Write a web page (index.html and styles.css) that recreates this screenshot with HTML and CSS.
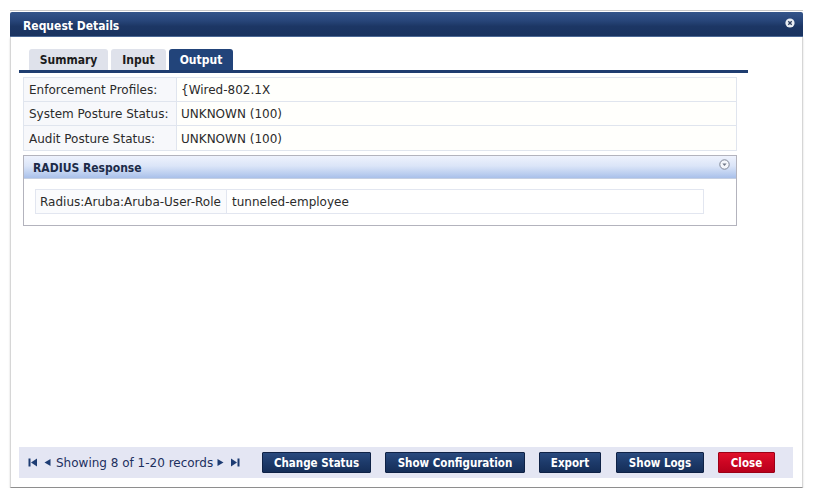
FILE: index.html
```html
<!DOCTYPE html>
<html>
<head>
<meta charset="utf-8">
<link rel="stylesheet" href="styles.css">
</head>
<body>
<div class="dialog">
  <div class="header">
    <span class="title">Request Details</span>
    <svg class="x-icon" width="10" height="10" viewBox="0 0 10 10"><circle cx="5" cy="5" r="4.6" fill="#e9edf3"/><path d="M3.3 3.3 L6.7 6.7 M6.7 3.3 L3.3 6.7" stroke="#2a3b5c" stroke-width="1.3"/></svg>
  </div>
  <div class="body">
    <div class="tabs">
      <div class="tab t-summary">Summary</div>
      <div class="tab t-input">Input</div>
      <div class="tab t-output active">Output</div>
    </div>
    <div class="grid">
      <div class="row"><div class="lbl">Enforcement Profiles:</div><div class="val">{Wired-802.1X</div></div>
      <div class="row"><div class="lbl">System Posture Status:</div><div class="val">UNKNOWN (100)</div></div>
      <div class="row"><div class="lbl">Audit Posture Status:</div><div class="val">UNKNOWN (100)</div></div>
    </div>
    <div class="panel">
      <div class="panel-head">
        <span>RADIUS Response</span>
        <svg class="toggle" width="11" height="11" viewBox="0 0 11 11"><circle cx="5.5" cy="5.5" r="4.7" fill="#f4f6fb" stroke="#7d8494" stroke-width="1"/><path d="M3.4 4.4 L7.6 4.4 L5.5 7 Z" fill="#6d7484"/></svg>
      </div>
      <div class="panel-body">
        <div class="inner">
          <div class="ilbl">Radius:Aruba:Aruba-User-Role</div>
          <div class="ival">tunneled-employee</div>
        </div>
      </div>
    </div>
    <div class="footer">
      <div class="pager">
        <svg width="10" height="9" viewBox="0 0 10 9"><rect x="0.5" y="0.5" width="2" height="8" fill="#1d3c73"/><path d="M9 0.5 L3 4.5 L9 8.5 Z" fill="#1d3c73"/></svg>
        <svg class="pg-gap" width="7" height="9" viewBox="0 0 7 9"><path d="M6.5 1 L0.5 4.5 L6.5 8 Z" fill="#1d3c73"/></svg>
        <span class="pg-text">Showing 8 of 1-20 records</span>
        <svg width="7" height="9" viewBox="0 0 7 9"><path d="M0.5 1 L6.5 4.5 L0.5 8 Z" fill="#1d3c73"/></svg>
        <svg class="pg-gap2" width="10" height="9" viewBox="0 0 10 9"><path d="M1 0.5 L7 4.5 L1 8.5 Z" fill="#1d3c73"/><rect x="7.5" y="0.5" width="2" height="8" fill="#1d3c73"/></svg>
      </div>
      <div class="btns">
        <div class="btn w-status">Change Status</div>
        <div class="btn w-config">Show Configuration</div>
        <div class="btn w-export">Export</div>
        <div class="btn w-logs">Show Logs</div>
        <div class="btn red w-close">Close</div>
      </div>
    </div>
  </div>
</div>
</body>
</html>
```

FILE: styles.css
```css
html, body {
  margin: 0;
  padding: 0;
  background: #ffffff;
}
body {
  font-family: "DejaVu Sans", Verdana, sans-serif;
  font-size: 12px;
  color: #2b2b2b;
}
.dialog {
  margin: 10px 0 0 10px;
  width: 793px;
  border-top: 1px solid #c9c9c9;
  padding-top: 1px;
}
.header {
  height: 25px;
  background: linear-gradient(#34558a 0%, #28467a 35%, #1c3664 60%, #1a3360 100%);
  border-bottom: 1px solid #4d6a98;
  box-sizing: border-box;
  display: flex;
  align-items: center;
  justify-content: space-between;
  padding: 0 8px 0 13px;
  border-radius: 2px 2px 0 0;
}
.title {
  font-family: "DejaVu Sans Condensed", "DejaVu Sans", Tahoma, sans-serif;
  color: #ffffff;
  font-weight: bold;
  font-size: 12px;
  padding-top: 4px;
}
.x-icon {
  display: block;
  margin-top: -3px;
}
.body {
  height: 451px;
  box-sizing: border-box;
  border-left: 1px solid #d6d6d6;
  border-right: 1px solid #d6d6d6;
  border-bottom: 1px solid #8e8e8e;
  box-shadow: 0 1px 2px rgba(0,0,0,0.15);
  padding: 12px 9px 9px 8px;
  display: flex;
  flex-direction: column;
}
.tabs {
  display: flex;
  width: 729px;
  padding-left: 10px;
  box-sizing: border-box;
  border-bottom: 3px solid #1f3d70;
  gap: 2px;
}
.tab {
  font-family: "DejaVu Sans Condensed", "DejaVu Sans", Tahoma, sans-serif;
  height: 21px;
  box-sizing: border-box;
  background: #dfe2eb;
  color: #1b1b1b;
  font-weight: bold;
  font-size: 12px;
  border-radius: 3px 3px 0 0;
  display: flex;
  align-items: center;
  justify-content: center;
  padding-top: 1px;
}
.t-summary { width: 79px; }
.t-input { width: 55px; margin-left: 1px; }
.t-output { width: 64px; margin-left: 1px; }
.tab.active {
  background: #22447a;
  color: #ffffff;
}
.grid {
  margin: 4px 0 0 4px;
  width: 714px;
  border-top: 1px solid #e0e5ee;
}
.row {
  display: flex;
  height: 24px;
  box-sizing: border-box;
  border-bottom: 1px solid #e0e5ee;
  border-left: 1px solid #e0e5ee;
  border-right: 1px solid #e0e5ee;
}
.row:nth-child(3) { height: 25px; }
.lbl {
  width: 153px;
  flex: none;
  background: #f7f8fb;
  border-right: 1px solid #e0e5ee;
  padding-left: 5px;
  padding-top: 1px;
  display: flex;
  align-items: center;
  box-sizing: border-box;
}
.val {
  flex: 1;
  background: #fffffc;
  padding-left: 4px;
  padding-top: 1px;
  display: flex;
  align-items: center;
}
.panel {
  margin: 4px 0 0 4px;
  width: 714px;
  height: 71px;
  box-sizing: border-box;
  border: 1px solid #b3b3bd;
}
.panel-head {
  font-family: "DejaVu Sans Condensed", "DejaVu Sans", Tahoma, sans-serif;
  height: 23px;
  box-sizing: border-box;
  background: linear-gradient(#eef2fd 0%, #dbe5f8 45%, #b7cbee 85%, #a9c0e9 100%);
  border-bottom: 1px solid #c5cfe2;
  display: flex;
  align-items: center;
  justify-content: space-between;
  padding: 0 6px 0 9px;
  font-weight: bold;
  color: #1c2b48;
}
.panel-head span { padding-top: 2px; }
.toggle { display: block; margin-top: -6px; }
.panel-body {
  padding: 10px 0 0 11px;
}
.inner {
  display: flex;
  width: 669px;
  height: 25px;
  box-sizing: border-box;
  border: 1px solid #e2e6f0;
}
.ilbl {
  width: 191px;
  flex: none;
  border-right: 1px solid #e2e6f0;
  background: #fafbfd;
  padding-left: 4px;
  padding-top: 1px;
  box-sizing: border-box;
  display: flex;
  align-items: center;
}
.ival {
  flex: 1;
  padding-left: 5px;
  padding-top: 1px;
  display: flex;
  align-items: center;
}
.footer {
  margin-top: auto;
  height: 31px;
  width: 774px;
  background: #e4e6f3;
  display: flex;
  align-items: center;
  padding-left: 9px;
  box-sizing: border-box;
}
.pager {
  display: flex;
  align-items: center;
  color: #1c2f5e;
  width: 234px;
  flex: none;
}
.pager svg { display: block; }
.pg-gap { margin-left: 6px; }
.pg-text { margin: 0 4px 0 5px; padding-top: 1px; }
.pg-gap2 { margin-left: 6px; }
.btns {
  display: flex;
  gap: 14px;
}
.btn {
  font-family: "DejaVu Sans Condensed", "DejaVu Sans", Tahoma, sans-serif;
  font-size: 11.5px;
  height: 21px;
  box-sizing: border-box;
  background: linear-gradient(#2a4a7e 0%, #1d3a6a 50%, #152e58 100%);
  border: 1px solid #0f2246;
  color: #ffffff;
  font-weight: bold;
  display: flex;
  align-items: center;
  justify-content: center;
  padding-top: 1px;
  border-radius: 1px;
}
.btn.red {
  background: linear-gradient(#e0102c 0%, #cc0522 50%, #b8001b 100%);
  border-color: #9c0016;
}
.w-status { width: 109px; }
.w-config { width: 140px; }
.w-export { width: 62px; }
.w-logs { width: 88px; margin-left: 1px; }
.w-close { width: 57px; }
```
